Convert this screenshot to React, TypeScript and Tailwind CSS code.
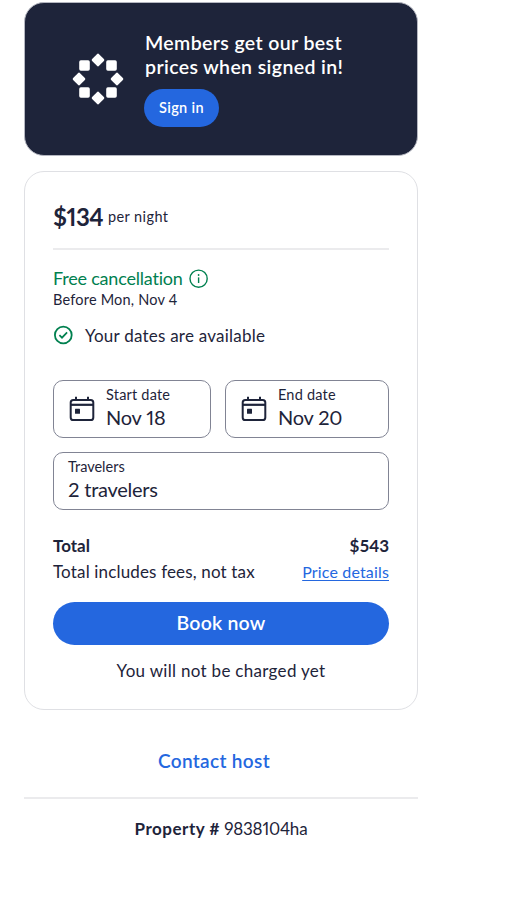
function MembershipMark() {
  return (
    <svg width="52" height="52" viewBox="-26 -26 52 52" fill="white" className="shrink-0">
      {[0, 90, 180, 270].map((angle) => (
        <g key={angle} transform={`rotate(${angle})`}>
          <rect x="-4.9" y="-4.9" width="9.8" height="9.8" rx="1.5" transform="translate(0 -19) rotate(45)" />
          <rect x="8.2" y="-18.8" width="10.6" height="10.6" rx="1.7" />
        </g>
      ))}
    </svg>
  );
}

function CalendarIcon() {
  return (
    <svg width="26" height="26" viewBox="0 0 26 26" fill="none" stroke="#1e243a" className="shrink-0">
      <rect x="1.7" y="4" width="22.6" height="20" rx="2.6" strokeWidth="2" />
      <path d="M2 8.8H24" strokeWidth="2.2" />
      <path d="M7 .8V4M19 .8V4" strokeWidth="2" />
      <rect x="6" y="12.8" width="5" height="5" rx=".5" fill="#1e243a" stroke="none" />
    </svg>
  );
}

function InfoIcon() {
  return (
    <svg width="20" height="20" viewBox="0 0 20 20" fill="none" stroke="#00804f" className="shrink-0">
      <circle cx="9.6" cy="9.7" r="8.6" strokeWidth="1.4" />
      <path d="M9.6 8.4V14" strokeWidth="1.4" />
      <circle cx="9.6" cy="6" r=".9" fill="#00804f" stroke="none" />
    </svg>
  );
}

function CheckIcon() {
  return (
    <svg width="20" height="20" viewBox="0 0 20 20" fill="none" stroke="#00804f" className="-mt-px shrink-0">
      <circle cx="10.3" cy="10" r="8.4" strokeWidth="1.8" />
      <path d="M6.4 10.1L9 12.7L14.1 7.4" strokeWidth="1.7" />
    </svg>
  );
}

function DateField({ label, value }: { label: string; value: string }) {
  return (
    <button className="flex h-[58px] items-center rounded-[10px] border border-[#818494] pl-[15px] text-left">
      <CalendarIcon />
      <span className="ml-[11px] flex flex-col">
        <span className="h-[22px] text-[14.5px] leading-[20px] tracking-[0.2px]">{label}</span>
        <span className="h-[26px] text-[20px] leading-[20px] tracking-[-0.2px] proportional-nums">{value}</span>
      </span>
    </button>
  );
}

export default function App() {
  return (
    <div className="min-h-[898px] bg-white font-['Lato',sans-serif] text-[#1e243a]">
      <main className="ml-6 w-[394px] pt-[2px]">
        <section className="flex h-[154px] items-center rounded-[20px] border border-[#b5b7c1] bg-[#1e243a] pl-[47px] text-white">
          <MembershipMark />
          <div className="ml-[20px] flex flex-col items-start">
            <h2 className="pl-px text-[19.5px] leading-6 font-semibold tracking-[0.38px]">
              Members get our best
              <br />
              prices when signed in!
            </h2>
            <button className="mt-[10px] h-[38px] w-[75px] rounded-full bg-[#2467df] text-[14.5px] font-semibold tracking-[0.35px]">
              Sign in
            </button>
          </div>
        </section>

        <section className="mt-[15px] h-[539px] rounded-[20px] border border-[#dfe0e4] px-7 pt-5">
          <div className="flex h-[50px] items-center">
            <span className="w-[50px] text-[24px] font-bold tracking-[-0.5px] proportional-nums">$134</span>
            <span className="ml-[5px] pb-px text-[14.5px] tracking-[0.4px]">per night</span>
          </div>
          <hr className="mt-[6px] border-t-2 border-[#ebebed]" />

          <div className="mt-[17px] flex h-[23px] items-center text-[#00804f]">
            <span className="text-[18px] tracking-[-0.2px]">Free cancellation</span>
            <span className="ml-[6px]"><InfoIcon /></span>
          </div>
          <p className="h-5 text-[14.5px] leading-5 tracking-[0.2px]">Before Mon, Nov 4</p>
          <div className="mt-[14px] flex h-[23px] items-center">
            <CheckIcon />
            <span className="ml-[12px] text-[17px] tracking-[0.23px]">Your dates are available</span>
          </div>

          <div className="mt-[33px] grid grid-cols-[158px_164px] gap-x-[14px]">
            <DateField label="Start date" value="Nov 18" />
            <DateField label="End date" value="Nov 20" />
          </div>
          <button className="mt-[14px] flex h-[58px] w-full flex-col justify-center rounded-[10px] border border-[#818494] pl-[14px] text-left">
            <span className="h-[22px] text-[14.5px] leading-[20px]">Travelers</span>
            <span className="h-[26px] text-[20px] leading-[20px] tracking-[-0.25px]">2 travelers</span>
          </button>

          <div className="mt-[25px] flex h-[22px] items-center justify-between text-[17px] font-bold">
            <span>Total</span>
            <span>$543</span>
          </div>
          <div className="mt-1 flex h-[22px] items-center justify-between">
            <span className="text-[17px] tracking-[0.16px]">Total includes fees, not tax</span>
            <a className="text-[16px] tracking-[0.16px] text-[#2467df] underline underline-offset-2">Price details</a>
          </div>
          <button className="mt-[19px] block h-[43px] w-full rounded-full bg-[#2467df] pb-px text-[19.5px] font-semibold tracking-[0.2px] text-white">
            Book now
          </button>
          <p className="mt-[15px] h-[22px] text-center text-[17px] leading-[22px] tracking-[0.3px]">
            You will not be charged yet
          </p>
        </section>

        <div className="mt-[39px] flex h-6 justify-center pr-[14px]">
          <a className="text-[19px] leading-6 font-semibold tracking-[0.35px] text-[#2467df]">Contact host</a>
        </div>
        <hr className="mt-6 border-t-2 border-[#ebebed]" />
        <p className="mt-[19px] h-[22px] text-center text-[17px] leading-[22px]">
          <strong className="font-bold tracking-[0.5px]">Property #</strong>{" "}
          <span className="tracking-[-0.2px] proportional-nums">9838104ha</span>
        </p>
      </main>
    </div>
  );
}
